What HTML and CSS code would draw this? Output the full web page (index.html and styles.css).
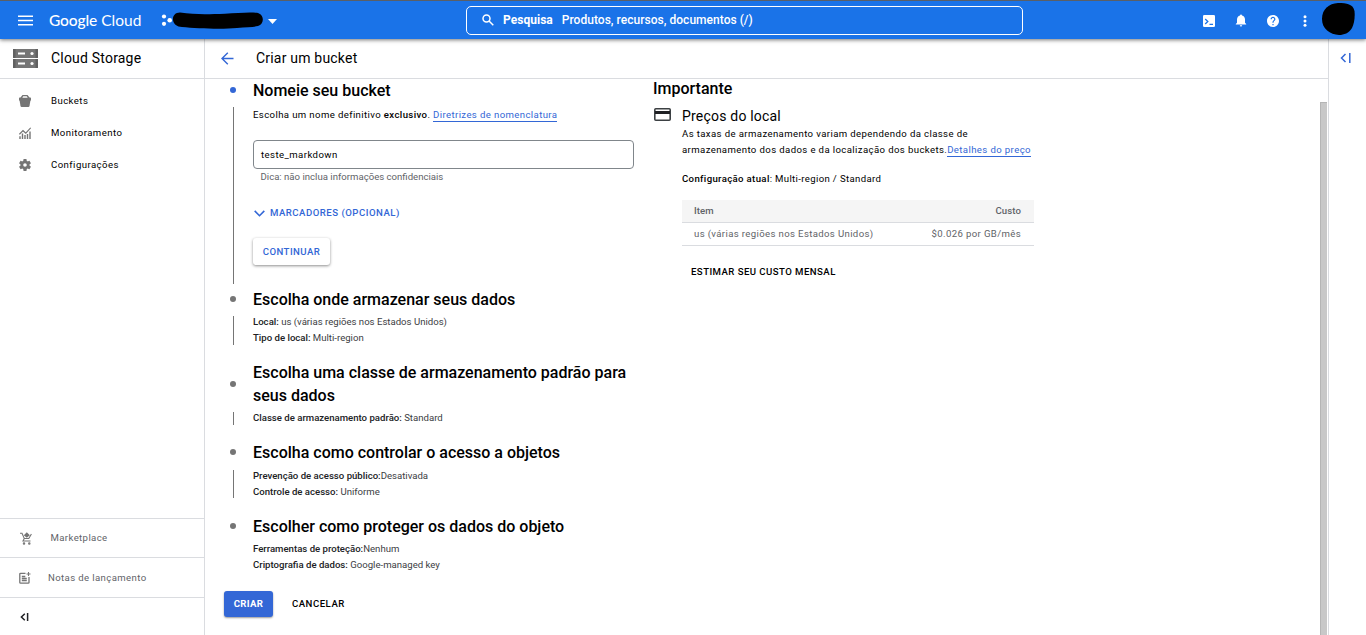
FILE: index.html
```html
<!DOCTYPE html>
<html lang="pt-BR">
<head>
<meta charset="utf-8">
<title>Criar um bucket</title>
<link rel="stylesheet" href="styles.css">
</head>
<body>
<header class="topbar">
  <svg class="menu-icon" width="15" height="11" viewBox="0 0 15 11" fill="#fff"><path d="M0 .5h15v1.4H0zM0 4.8h15v1.4H0zM0 9.1h15v1.4H0z"/></svg>
  <div class="brand"><span class="brand-google">Google</span><span class="brand-cloud">Cloud</span></div>
  <div class="project">
    <svg width="112" height="19" viewBox="0 0 112 19"><g fill="#fff"><circle cx="3" cy="5.500" r="2.100"/><circle cx="3" cy="12.800" r="2.100"/><circle cx="8.700" cy="9.200" r="2.300"/></g><path d="M19 1.500C14 1.500 11.500 5 12 9S16 15.800 21 16C36 17.500 61 18.500 76 17C86 16 93 16 97 15C103 13.500 103.500 5 98 2.500C93 .5 78 2 64 2.700C47 3.200 34 3.700 19 1.500Z" fill="#000"/></svg>
    <svg width="9" height="5" viewBox="0 0 9 5" fill="#fff"><path d="M0 0h9L4.500 5z"/></svg>
  </div>
  <div class="search">
    <svg width="12" height="12" viewBox="0 0 12 12" fill="none" stroke="#fff" stroke-width="1.500"><circle cx="4.500" cy="4.500" r="3.500"/><path d="M7 7l4.300 4.300"/></svg>
    <b>Pesquisa</b><span>Produtos, recursos, documentos (/)</span>
  </div>
  <nav class="tools">
    <svg width="12" height="12" viewBox="0 0 12 12"><rect width="12" height="12" rx="1.300" fill="#fff"/><path d="M2.200 4l2.600 2.500-2.600 2.500M6.500 9.300h3.500" fill="none" stroke="#1a73e8" stroke-width="1.300"/></svg>
    <svg width="12" height="13" viewBox="0 0 12 13" fill="#fff"><path d="M5 1.500a1 1 0 0 1 2 0C9 2 10 3.700 10 5.500v3.300l1.200 1.200v.6H.8V10L2 8.800V5.500C2 3.700 3 2 5 1.500zM4.800 11.300h2.400a1.200 1.200 0 0 1-2.400 0z"/></svg>
    <svg width="12" height="12" viewBox="2 2 20 20" fill="#fff"><path d="M12 2C6.480 2 2 6.480 2 12s4.480 10 10 10 10-4.480 10-10S17.520 2 12 2zm1 17h-2v-2h2v2zm2.070-7.750l-.9.920C13.450 12.900 13 13.500 13 15h-2v-.5c0-1.100.45-2.100 1.170-2.830l1.240-1.260c.37-.36.590-.86.590-1.410 0-1.100-.9-2-2-2s-2 .9-2 2H8c0-2.210 1.790-4 4-4s4 1.790 4 4c0 .88-.36 1.680-.93 2.250z"/></svg>
    <svg width="12" height="12" viewBox="0 0 12 12" fill="#fff"><circle cx="6" cy="1.700" r="1.500"/><circle cx="6" cy="6" r="1.500"/><circle cx="6" cy="10.300" r="1.500"/></svg>
  </nav>
  <svg class="avatar" width="33" height="32" viewBox="0 0 33 32"><path d="M16 0C25 0 31 1 32.500 8C33.200 15 32 21 30 25C27 30 22 32 17 32C8 31.500 0 26 0 16C0 6 7 .5 16 0Z"/></svg>
</header>
<div class="shell">
  <aside class="sidebar">
    <div class="product">
      <svg width="25" height="19" viewBox="0 0 25 19"><path d="M0 0h25v9H0zM0 10h25v9H0z" fill="#757575"/><path d="M0 0h2.500v9H0zM22.500 0H25v9h-2.500zM0 10h2.500v9H0zM22.500 10H25v9h-2.500z" fill="#616161"/><path d="M5 3.500h7v2H5zM5 13.500h7v2H5z" fill="#fff"/><circle cx="19" cy="4.500" r="1.600" fill="#fff"/><circle cx="19" cy="14.500" r="1.600" fill="#fff"/></svg>
      <span>Cloud Storage</span>
    </div>
    <ul class="nav">
      <li><svg width="12" height="12" viewBox="0 0 12 12" fill="#757575"><path d="M3.500 0h5L10.500 2.500H11.300q.7 0 .7.700V5.500H0V3.200q0-.7.700-.7h.8zM4.200 1.300L3.300 2.800h5.400L7.800 1.300z" fill-rule="evenodd"/><path d="M.5 5h11l-1 6q-.2 1-1.100 1H2.600q-.9 0-1.100-1z"/></svg><span>Buckets</span></li>
      <li><svg width="12" height="12" viewBox="0 0 12 12" fill="none" stroke="#757575"><path d="M.4 7.300L4 3.700l2.800 2.500L11.700.8" stroke-width="1.200"/><path d="M1 12V9.300M3.500 12V6.500M6 12V8M8.500 12V7M11 12V4.500" stroke-width="1.400"/></svg><span>Monitoramento</span></li>
      <li><svg width="12" height="12" viewBox="2 2 20 20" fill="#757575"><path d="M19.430 12.980c.04-.32.070-.64.070-.98s-.03-.66-.07-.98l2.110-1.650c.19-.15.240-.42.120-.64l-2-3.460c-.12-.22-.39-.3-.61-.22l-2.490 1c-.52-.4-1.080-.73-1.690-.98l-.38-2.650C14.460 2.180 14.250 2 14 2h-4c-.25 0-.46.180-.49.420l-.38 2.650c-.61.250-1.170.590-1.690.98l-2.490-1c-.23-.09-.49 0-.61.220l-2 3.460c-.13.220-.07.490.12.640l2.110 1.650c-.04.320-.07.650-.07.980s.03.660.07.980l-2.110 1.650c-.19.150-.24.420-.12.640l2 3.460c.12.220.39.300.61.220l2.490-1c.52.400 1.080.73 1.690.98l.38 2.650c.03.240.24.420.49.420h4c.25 0 .46-.18.490-.42l.38-2.650c.61-.25 1.170-.59 1.690-.98l2.490 1c.23.090.49 0 .61-.22l2-3.460c.12-.22.070-.49-.12-.64l-2.110-1.650zM12 15a3 3 0 1 1 0-6 3 3 0 0 1 0 6z"/></svg><span>Configurações</span></li>
    </ul>
    <div class="extra"><svg width="12" height="13" viewBox="0 0 12 13" fill="none" stroke="#757575" stroke-width="1.100"><path d="M0 1.200h2l2.300 5.300h4.500L11.400 2M4.300 6.500L3 9h7.500"/><path d="M3.800 3.300L6.800.3l3 3-3 2.500z" fill="#757575" stroke="none"/><circle cx="4" cy="11.500" r=".7"/><circle cx="9.300" cy="11.500" r=".7"/></svg><span>Marketplace</span></div>
    <div class="extra extra-notes"><svg width="12" height="12" viewBox="0 0 12 12" fill="none" stroke="#757575" stroke-width="1.300"><path d="M6.500 1.300H1.600q-.8 0-.8.800v8.300q0 .8.800.8h7.600q.8 0 .8-.8V5M2.800 4.500h3.500M2.800 6.500h5M2.800 8.500h5"/><path d="M9.500 0v4M7.500 2h4" stroke-width="1.100"/></svg><span>Notas de lançamento</span></div>
    <div class="collapse"><svg width="9" height="8" viewBox="0 0 9 8" fill="none" stroke="#202124" stroke-width="1.500"><path d="M4.800.8L1.400 4l3.400 3.200M7.600 0v8"/></svg></div>
  </aside>
  <main class="main">
    <div class="page-head">
      <svg width="13" height="13" viewBox="0 0 13 13" fill="none" stroke="#3367d6" stroke-width="1.400"><path d="M12.500 6.500H1.200M6.800.7L1 6.500l5.800 5.800"/></svg>
      <h1>Criar um bucket</h1>
    </div>
    <div class="content">
      <section class="form">
        <div class="step step-name active">
          <i class="dot"></i><h2>Nomeie seu bucket</h2>
          <i class="rail"></i>
          <div class="step-body">
            <p class="intro">Escolha um nome definitivo <b>exclusivo</b>. <a>Diretrizes de nomenclatura</a></p>
            <div class="field">teste_markdown</div>
            <p class="hint">Dica: não inclua informações confidenciais</p>
            <div class="labels"><svg width="11" height="7" viewBox="0 0 11 7" fill="none" stroke="#3367d6" stroke-width="1.600"><path d="M.7.9l4.800 4.800L10.300.9"/></svg><span>MARCADORES (OPCIONAL)</span></div>
            <div class="continue">CONTINUAR</div>
          </div>
        </div>
        <div class="step step-location">
          <i class="dot"></i><h2>Escolha onde armazenar seus dados</h2>
          <i class="rail"></i>
          <div class="step-body summary"><p><b>Local:</b> us (várias regiões nos Estados Unidos)</p><p><b>Tipo de local:</b> Multi-region</p></div>
        </div>
        <div class="step step-class">
          <i class="dot"></i><h2>Escolha uma classe de armazenamento padrão para<br>seus dados</h2>
          <i class="rail"></i>
          <div class="step-body summary"><p><b>Classe de armazenamento padrão:</b> Standard</p></div>
        </div>
        <div class="step step-access">
          <i class="dot"></i><h2>Escolha como controlar o acesso a objetos</h2>
          <i class="rail"></i>
          <div class="step-body summary"><p><b>Prevenção de acesso público:</b>Desativada</p><p><b>Controle de acesso:</b> Uniforme</p></div>
        </div>
        <div class="step step-protect">
          <i class="dot"></i><h2>Escolher como proteger os dados do objeto</h2>
          <i></i>
          <div class="step-body summary"><p><b>Ferramentas de proteção:</b>Nenhum</p><p><b>Criptografia de dados:</b> Google-managed key</p></div>
        </div>
        <div class="actions"><div class="create">CRIAR</div><div class="cancel">CANCELAR</div></div>
      </section>
      <section class="info">
        <h2>Importante</h2>
        <div class="info-body">
          <svg width="17" height="13" viewBox="0 0 17 13"><rect x=".8" y=".8" width="15.400" height="11.400" rx="1" fill="none" stroke="#3c4043" stroke-width="1.600"/><path d="M1 3h15v3H1z" fill="#202124"/></svg>
          <div>
            <h3>Preços do local</h3>
            <p class="desc">As taxas de armazenamento variam dependendo da classe de<br>armazenamento dos dados e da localização dos buckets.<a>Detalhes do preço</a></p>
            <p class="config"><b>Configuração atual</b>: Multi-region / Standard</p>
            <div class="row row-head"><span>Item</span><span>Custo</span></div>
            <div class="row"><span>us (várias regiões nos Estados Unidos)</span><span>$0.026 por GB/mês</span></div>
            <div class="estimate">ESTIMAR SEU CUSTO MENSAL</div>
          </div>
        </div>
      </section>
      <div class="scroll"></div>
    </div>
  </main>
  <aside class="panel"><svg width="11" height="10" viewBox="0 0 11 10" fill="none" stroke="#3367d6" stroke-width="1.500"><path d="M5.500 1L1.500 5l4 4M9.800 0v10"/></svg></aside>
</div>
</body>
</html>
```

FILE: styles.css
```css
* { box-sizing: border-box; margin: 0; padding: 0; }
body { width: 1366px; height: 635px; overflow: hidden; background: #fff; color: #000; font: 9.600px/16px Roboto, sans-serif; }
svg { display: block; flex: none; }
h1, h2, h3 { font-weight: 400; white-space: nowrap; }
p, span { white-space: nowrap; }
b { font-weight: 500; }

.topbar { position: relative; z-index: 2; display: flex; align-items: center; height: 39px; padding: 1px 0 0 18px; background: #1a73e8; border-top: 1px solid #5a5f66; box-shadow: 0 1px 4px rgba(0,0,0,.55); color: #fff; }
.brand { display: flex; gap: 4px; width: 94px; margin: -2px 0 0 16px; font: 15.500px/20px Lato, sans-serif; }
.brand-google { font-weight: 500; letter-spacing: -.1px; }
.project { display: flex; align-items: center; gap: 3px; width: 120px; margin-left: 18px; }
.project svg + svg { margin-left: -8px; margin-top: 2px; }
.search { display: flex; align-items: center; width: 557px; height: 29px; margin-left: 185px; padding: 0 0 1px 15px; border: 1px solid #fff; border-radius: 5px; font-size: 12px; font-weight: 500; line-height: 16px; letter-spacing: .03px; }
.search b { margin: 0 9px 0 9px; font-weight: 700; }
.tools { display: flex; align-items: center; gap: 20px; margin-left: 180px; }
.avatar { margin: -4px 0 0 11px; }

.shell { display: grid; grid-template-columns: 205px 1123px 38px; height: 596px; }
.sidebar { display: flex; flex-direction: column; border-right: 1px solid #dadce0; }
.product { display: flex; align-items: center; gap: 13px; height: 40px; padding: 0 0 1px 13px; border-bottom: 1px solid #dadce0; font-size: 14px; letter-spacing: .2px; }
.nav { flex: 1; padding-top: 6px; list-style: none; }
.nav li { display: flex; align-items: center; gap: 20px; height: 32px; padding-left: 19px; letter-spacing: .44px; }
.extra { display: flex; align-items: center; gap: 19px; height: 39px; padding-left: 19.500px; border-top: 1px solid #dadce0; color: #5f6368; letter-spacing: .38px; }
.extra-notes { gap: 17px; height: 40px; padding-left: 19px; }
.collapse { height: 38px; padding: 15px 0 0 20px; border-top: 1px solid #dadce0; }

.page-head { display: flex; align-items: center; gap: 22px; height: 40px; padding: 0 0 1px 16px; border-bottom: 1px solid #dadce0; }
.page-head h1 { font-size: 14px; letter-spacing: .2px; }
.content { display: flex; height: 556px; }
.form { width: 448px; padding-left: 19px; }
h2 { font-size: 16px; line-height: 23px; font-weight: 500; }
.step { display: grid; grid-template-columns: 18px 381px; column-gap: 11px; }
.step > i { justify-self: center; }
.dot { align-self: center; width: 6px; height: 6px; margin-bottom: 1px; border-radius: 50%; background: #757575; }
.active .dot { background: #3367d6; }
.rail { width: 1px; background: #757575; }
.step-name .rail { margin: 5px 0 4px; }
.step-name .step-body { height: 186px; }
.step-location .rail { margin: 5px 0 16px; }
.step-class .rail { margin: 5px 0 16px; }
.step-access .rail { margin: 6px 0 17px; }
.summary { padding: 3px 0 15px; color: #3c4043; }
.summary b { color: #202124; }
.step-access .summary { padding: 4px 0 15px; }
.intro { height: 20px; padding-top: 5px; letter-spacing: .38px; }
a { display: inline-block; line-height: 13px; border-bottom: 1px solid #3367d6; color: #3367d6; }
.field { height: 29px; margin-top: 18px; padding: 0 7px; border: 1px solid #80868b; border-radius: 4px; line-height: 27px; letter-spacing: .42px; }
.hint { padding-left: 7.500px; color: #5f6368; }
.labels { display: flex; align-items: center; gap: 5px; margin: 20px 0 17px 1px; color: #3367d6; font-weight: 500; letter-spacing: .49px; }
.continue { width: 77px; height: 27px; border-radius: 3px; box-shadow: 0 1px 3px rgba(0,0,0,.45); color: #3367d6; font-weight: 500; line-height: 27px; text-align: center; letter-spacing: .45px; }
.actions { display: flex; align-items: center; gap: 19px; font-weight: 500; letter-spacing: .5px; padding-top: 3px; }
.create { width: 49px; height: 26px; border-radius: 3px; background: #3367d6; box-shadow: 0 1px 2px rgba(0,0,0,.4); color: #fff; font-weight: 700; line-height: 26px; text-align: center; letter-spacing: .3px; }

.info { width: 381px; }
.info h2 { margin-top: -2px; }
.info-body { display: grid; grid-template-columns: 17px 352px; column-gap: 12px; }
.info-body > svg { margin: 8px 0 0 1px; }
h3 { padding-top: 6px; font-size: 14px; line-height: 20px; letter-spacing: .2px; }
.desc { letter-spacing: .385px; }
.config { margin: 13px 0; letter-spacing: .35px; }
.row { display: flex; justify-content: space-between; align-items: center; height: 23px; padding: 0 13px 0 12px; border-bottom: 1px solid #dadce0; color: #5f6368; letter-spacing: .36px; }
.row-head { background: #f5f5f5; font-weight: 500; letter-spacing: .1px; }
.estimate { margin: 18px 0 0 9px; font-weight: 500; letter-spacing: .45px; }
.scroll { width: 7px; height: 533px; margin: 23px 0 0 286px; background: #c8c8c8; border: 1px solid #b5b5b5; border-width: 1px 0 0 1px; }
.panel { padding: 14px 0 0 11px; border-left: 1px solid #dadce0; }
```
